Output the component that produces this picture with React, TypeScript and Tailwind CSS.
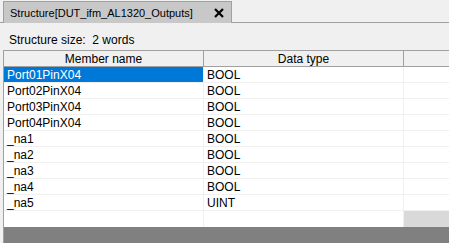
import React from "react";

const rows = [
  ["Port01PinX04", "BOOL"],
  ["Port02PinX04", "BOOL"],
  ["Port03PinX04", "BOOL"],
  ["Port04PinX04", "BOOL"],
  ["_na1", "BOOL"],
  ["_na2", "BOOL"],
  ["_na3", "BOOL"],
  ["_na4", "BOOL"],
  ["_na5", "UINT"],
];

export default function App() {
  return (
    <div
      className="w-[449px] h-[243px] overflow-hidden bg-[#f0f0f0] flex flex-col text-[12px] text-black"
      style={{ fontFamily: '"Liberation Sans", Arial, sans-serif' }}
    >
      {/* tab strip */}
      <div className="flex h-[23px] shrink-0">
        <div className="w-[3px] border-b border-[#a0a0a0]" />
        <div className="mt-[1px] w-[229px] h-[22px] bg-[#c8c8c8] border-l border-t border-r border-[#a0a0a0] flex items-center pl-[6px] leading-[16px]">
          <span className="flex-1 text-[11px]">Structure[DUT_ifm_AL1320_Outputs]</span>
          <svg width="10" height="10" viewBox="0 0 10 10" className="mr-[7px] mt-[1px]">
            <path d="M1 1 L9 9 M9 1 L1 9" stroke="#000" strokeWidth="2.2" />
          </svg>
        </div>
        <div className="flex-1 border-b border-[#a0a0a0]" />
      </div>

      {/* info line */}
      <div className="h-[27px] shrink-0 flex items-center pl-[9px] pt-[6px] leading-[16px]">
        Structure size:&nbsp; 2 words
      </div>

      {/* grid */}
      <div className="ml-[3px] flex-1 border-l border-t border-[#a0a0a0] flex flex-col">
        <div className="flex h-[16px] shrink-0 border-b border-[#a0a0a0] leading-[16px]">
          <div className="w-[200px] border-r border-[#a0a0a0] text-center">Member name</div>
          <div className="w-[200px] border-r border-[#a0a0a0] text-center">Data type</div>
          <div className="flex-1" />
        </div>
        <div className="bg-white flex flex-col shrink-0">
          {rows.map(([name, type], i) => (
            <div key={name} className="flex h-[16px] leading-[16px] border-b border-[#f0f0f0]">
              <div
                className={
                  i === 0
                    ? "w-[200px] border-r border-[#f0f0f0] pl-[3px] bg-[#0078d7] text-white"
                    : "w-[200px] border-r border-[#f0f0f0] pl-[3px]"
                }
              >
                {name}
              </div>
              <div className="w-[200px] border-r border-[#f0f0f0] pl-[3px]">{type}</div>
              <div className="flex-1" />
            </div>
          ))}
          <div className="flex h-[16px]">
            <div className="w-[200px] border-r border-[#f0f0f0]" />
            <div className="w-[200px] border-r border-[#f0f0f0]" />
            <div className="flex-1 bg-[#d9d9d9]" />
          </div>
        </div>
        <div className="flex-1 bg-[#808080]" />
      </div>
    </div>
  );
}
